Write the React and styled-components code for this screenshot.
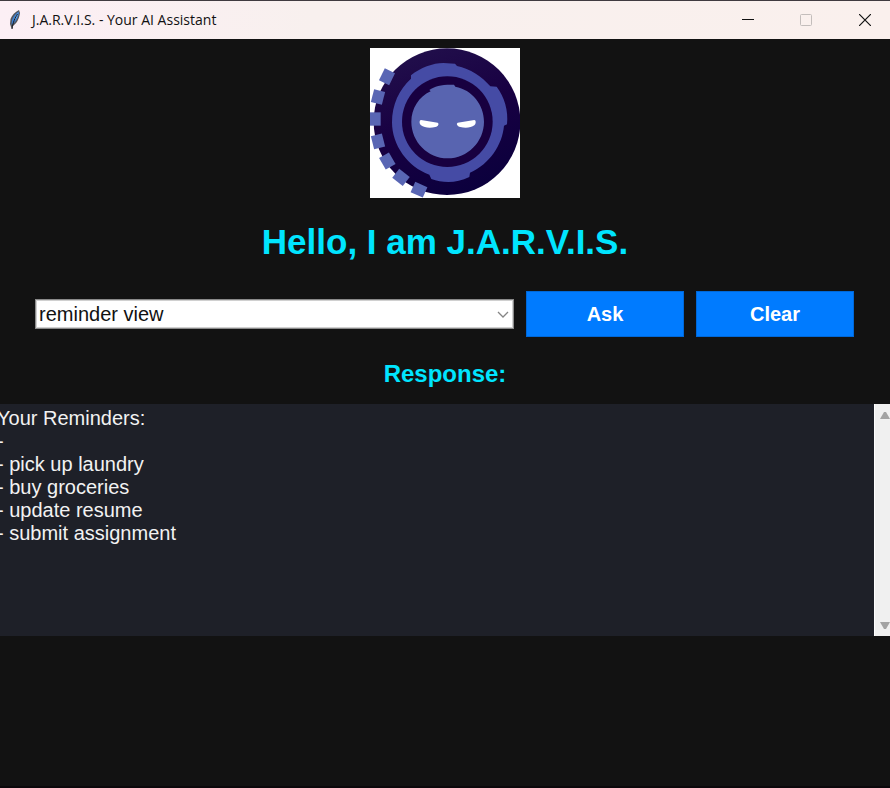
import React, { useState } from "react";
import styled, { createGlobalStyle } from "styled-components";

const GlobalStyle = createGlobalStyle`
  * { box-sizing: border-box; }
  body {
    margin: 0;
    background: #121212;
    font-family: "Liberation Sans", Arial, sans-serif;
  }
`;

const Window = styled.div`
  display: flex;
  flex-direction: column;
  min-height: 100vh;
  overflow: hidden;
  background: #121212;
  border-bottom: 2px solid #0b080b;
`;

const TitleBar = styled.header`
  display: flex;
  align-items: center;
  height: 39px;
  padding-left: 8px;
  border-top: 1px solid #403b40;
  background: linear-gradient(90deg, #fceff5, #f8f0ee 35%, #faf0ed);
`;

const WindowTitle = styled.span`
  flex: 1;
  margin-left: 10px;
  color: #111;
  font: 14px/20px "Open Sans", "Noto Sans", sans-serif;
`;

const WindowButton = styled.button`
  display: grid;
  place-items: center;
  width: 58px;
  height: 38px;
  padding: 0;
  border: 0;
  background: transparent;
  color: #111;

  &:last-child {
    width: 55px;
    padding-left: 5px;
  }
  &:disabled { color: #c3bdbb; }
`;

const Main = styled.main`
  display: flex;
  flex-direction: column;
  align-items: center;
  padding-top: 9px;
`;

const Greeting = styled.h1`
  margin: 24px 0 0;
  color: #00e5ff;
  font-size: 35px;
  line-height: 40px;
`;

const QueryForm = styled.form`
  display: flex;
  align-items: center;
  gap: 12px;
  width: 100%;
  margin-top: 29px;
  padding: 0 36px 0 35px;
`;

const ComboBox = styled.div`
  display: flex;
  flex: 1;
  min-width: 0;
  height: 30px;
  border: 1px solid #8a8a8a;
  outline: 1px solid #d0d0d0;
  outline-offset: -2px;
  background: #fff;
`;

const QueryInput = styled.input`
  flex: 1;
  min-width: 0;
  padding: 0 0 0 3px;
  border: 0;
  outline: 0;
  background: transparent;
  color: #111;
  font: 20px/26px "Liberation Sans", Arial, sans-serif;
`;

const ComboArrow = styled.button`
  display: grid;
  place-items: center;
  width: 20px;
  padding: 2px 0 0;
  border: 0;
  background: transparent;
  color: #858585;
`;

const ActionButton = styled.button`
  width: 158px;
  height: 46px;
  padding: 0;
  border: 1px solid #0068d8;
  background: #007bff;
  color: #fff;
  font: bold 20px/24px "Liberation Sans", Arial, sans-serif;
`;

const ResponseLabel = styled.label`
  margin-top: 23px;
  color: #00e5ff;
  font-size: 24px;
  font-weight: bold;
  line-height: 28px;
`;

const ResponsePanel = styled.div`
  display: flex;
  align-self: stretch;
  height: 232px;
  margin-top: 16px;
  background: #1e2028;
`;

const ResponseText = styled.textarea`
  flex: 1;
  min-width: 0;
  margin-left: -3px;
  padding: 3px 0 0;
  border: 0;
  outline: 0;
  resize: none;
  overflow: hidden;
  background: transparent;
  color: #f2f2f2;
  font: 20px/23px "Liberation Sans", Arial, sans-serif;
`;

const ScrollBar = styled.div`
  display: flex;
  flex-direction: column;
  justify-content: space-between;
  width: 16px;
  overflow: hidden;
  border-left: 1px solid #fff;
  background: #f0f0f0;
`;

const ScrollButton = styled.button`
  width: 22px;
  height: 20px;
  padding: 0;
  border: 0;
  background: transparent;
  color: #a3a3a3;

  svg { display: block; }
`;

function FeatherIcon() {
  return (
    <svg width="14" height="22" viewBox="0 0 14 22" aria-hidden="true">
      <path d="M11 1C7 3 4 6 2.500 10L2 15l1 3 1 2 1-3C9 14 11 10 12 4z" fill="#55565c" />
      <path d="M10.500 2.500C7 5 5 8 4 11l-.5 5C8 13 10 9 11 4z" fill="#3f7fcf" />
      <path d="M10 4C8 6 6 9 6 12l3-4z" fill="#86bdf0" />
      <path d="M9.500 5C7 9 5 13 4 20" fill="none" stroke="#16181f" strokeWidth="1" />
    </svg>
  );
}

const teeth = [
  [66, 103, 26],
  [39, 164, 14],
  [30, 230, 0],
  [39, 297, -14],
  [67, 356, -30],
  [108, 405, -52],
  [162, 442, -66],
];

function Logo() {
  return (
    <svg width="150" height="150" viewBox="15 17 450 450" role="img" aria-label="J.A.R.V.I.S. logo">
      <defs>
        <linearGradient id="disc" x1="0.2" y1="0" x2="0.6" y2="1">
          <stop offset="0" stopColor="#22104c" />
          <stop offset="0.5" stopColor="#180042" />
          <stop offset="1" stopColor="#0b003d" />
        </linearGradient>
      </defs>
      <path fill="#fff" d="M15 17h450v450H15z" />
      <circle cx="246" cy="238" r="220" fill="url(#disc)" />
      <path
        fill="#454ba5"
        d="M138 99C166 76 204 62 235 62L270 64L276 71C316 80 350 102 376 132L395 133C418 163 431 205 426 246L417 250C412 307 374 365 315 391L313 404C273 424 233 422 199 410L193 397C129 374 81 309 81 240C81 187 102 142 138 109Z"
      />
      <circle cx="247" cy="238" r="136" fill="#180040" />
      <path
        fill="#5864b0"
        d="M193 143C210 131 230 126 267 127L271 133C321 142 357 187 357 238C357 298 308 348 248 348C188 348 139 298 139 238C139 200 161 163 197 147Z"
      />
      {teeth.map(([x, y, angle]) => (
        <rect
          key={y}
          x={x - 17}
          y={y - 20}
          width="34"
          height="40"
          fill="#5966b4"
          transform={`rotate(${angle} ${x} ${y})`}
        />
      ))}
      <path fill="#fff" d="M168 233L218 241C223 244 220 252 211 254C195 258 177 256 168 249C162 243 163 233 168 233Z" />
      <path fill="#fff" d="M328 233L278 241C273 244 276 251 286 254C301 258 319 256 328 249C334 243 333 233 328 233Z" />
    </svg>
  );
}

const reminders = ["", "pick up laundry", "buy groceries", "update resume", "submit assignment"];
const reminderText = ["Your Reminders:", ...reminders.map((item) => `- ${item}`)].join("\n");

export default function App() {
  const [query, setQuery] = useState("reminder view");
  const [response, setResponse] = useState(reminderText);

  const ask = (event) => {
    event.preventDefault();
    setResponse(query.trim() === "reminder view" ? reminderText : "");
  };

  const clear = () => {
    setQuery("");
    setResponse("");
  };

  return (
    <Window>
      <GlobalStyle />
      <TitleBar>
        <FeatherIcon />
        <WindowTitle>J.A.R.V.I.S. - Your AI Assistant</WindowTitle>
        <WindowButton aria-label="Minimize">
          <svg width="12" height="12" viewBox="0 0 12 12"><path d="M0 5.500h12" stroke="currentColor" /></svg>
        </WindowButton>
        <WindowButton aria-label="Maximize" disabled>
          <svg width="12" height="12" viewBox="0 0 12 12"><rect x=".5" y=".5" width="11" height="11" rx="1" fill="none" stroke="currentColor" /></svg>
        </WindowButton>
        <WindowButton aria-label="Close">
          <svg width="12" height="12" viewBox="0 0 12 12"><path d="M0 0l12 12M12 0L0 12" stroke="currentColor" strokeWidth="1.200" /></svg>
        </WindowButton>
      </TitleBar>
      <Main>
        <Logo />
        <Greeting>Hello, I am J.A.R.V.I.S.</Greeting>
        <QueryForm onSubmit={ask}>
          <ComboBox>
            <QueryInput
              aria-label="Command"
              value={query}
              onChange={(event) => setQuery(event.target.value)}
            />
            <ComboArrow type="button" aria-label="Show commands">
              <svg width="12" height="8" viewBox="0 0 12 8"><path d="M1 1l5 5 5-5" fill="none" stroke="currentColor" strokeWidth="1.300" /></svg>
            </ComboArrow>
          </ComboBox>
          <ActionButton type="submit">Ask</ActionButton>
          <ActionButton type="button" onClick={clear}>Clear</ActionButton>
        </QueryForm>
        <ResponseLabel htmlFor="response">Response:</ResponseLabel>
        <ResponsePanel>
          <ResponseText id="response" readOnly value={response} />
          <ScrollBar>
            <ScrollButton aria-label="Scroll up">
              <svg width="22" height="20" viewBox="0 0 22 20"><path d="M5 15l4-7h2l4 7z" fill="currentColor" /></svg>
            </ScrollButton>
            <ScrollButton aria-label="Scroll down">
              <svg width="22" height="20" viewBox="0 0 22 20"><path d="M5 6h10l-4 7H9z" fill="currentColor" /></svg>
            </ScrollButton>
          </ScrollBar>
        </ResponsePanel>
      </Main>
    </Window>
  );
}
